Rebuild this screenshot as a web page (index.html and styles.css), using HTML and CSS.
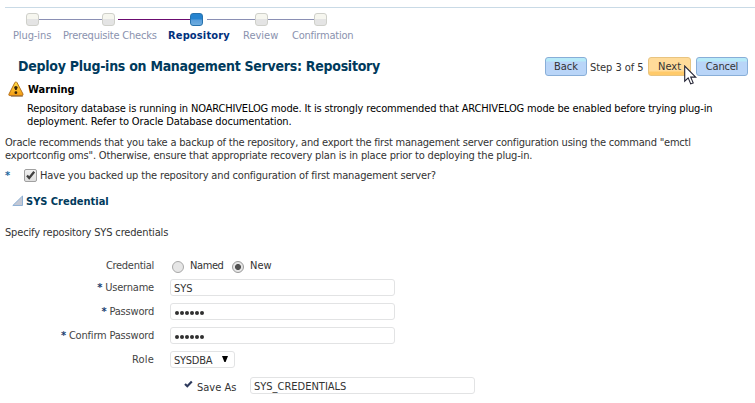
FILE: index.html
```
<!DOCTYPE html>
<html lang="en">
<head>
<meta charset="utf-8">
<title>Deploy Plug-ins on Management Servers: Repository</title>
<link rel="stylesheet" href="styles.css">
</head>
<body>
<nav class="train">
  <div class="track">
    <i class="stop"></i><i class="link"></i><i class="stop"></i><i class="link visited"></i><i class="stop current"></i><i class="link after"></i><i class="stop"></i><i class="link"></i><i class="stop"></i>
  </div>
  <div class="stop-labels">
    <span class="w-plug">Plug-ins</span><span class="w-pre">Prerequisite Checks</span><span class="w-repo active">Repository</span><span class="w-rev">Review</span><span class="w-conf">Confirmation</span>
  </div>
</nav>
<header class="heading">
  <h1>Deploy Plug-ins on Management Servers: Repository</h1>
  <div class="actions">
    <button class="btn back">Back</button>
    <span class="step">Step 3 of 5</span>
    <button class="btn next">Next
      <svg class="cursor" width="13" height="21" viewBox="0 0 13 21"><path d="M.7 1v15.2l3.5-3.3 2.5 6 2.5-1-2.5-5.8h5z" fill="#fff" stroke="#222233" stroke-width="1.1"/></svg>
    </button>
    <button class="btn cancel">Cancel</button>
  </div>
</header>
<section class="warning">
  <div class="warning-title">
    <svg width="16" height="16" viewBox="0 0 16 16"><defs><linearGradient id="amber" x2="0" y2="1"><stop stop-color="#ffe04a"/><stop offset="1" stop-color="#f39a12"/></linearGradient></defs><path d="M7.7 1 Q8.5.7 9 1.6L15 13Q15.4 14.5 14 14.6H1.8Q.3 14.5 1 13L6.8 1.7Q7.1 1 7.7 1z" fill="url(#amber)" stroke="#b5711d"/><path d="M3 15.3h11.8" stroke="#8b6a43" stroke-width=".8"/><circle cx="7.9" cy="6.6" r="1.7" fill="#3a2508"/><path d="M6.8 7h2.2l-.3 2H7.1z" fill="#3a2508"/><circle cx="7.9" cy="11.7" r="1.4" fill="#3a2508"/></svg>
    <strong>Warning</strong>
  </div>
  <p class="warning-text"><span class="line l1">Repository database is running in NOARCHIVELOG mode. It is strongly recommended that ARCHIVELOG mode be enabled before trying plug-in</span><span class="line l2">deployment. Refer to Oracle Database documentation.</span></p>
</section>
<p class="advice"><span class="line l3">Oracle recommends that you take a backup of the repository, and export the first management server configuration using the command "emctl</span><span class="line l4">exportconfig oms". Otherwise, ensure that appropriate recovery plan is in place prior to deploying the plug-in.</span></p>
<label class="confirm">
  <span class="req">*</span>
  <svg width="13" height="13" viewBox="0 0 13 13"><defs><linearGradient id="face" x2="0" y2="1"><stop stop-color="#f1f1f1"/><stop offset="1" stop-color="#dedede"/></linearGradient></defs><rect x=".5" y=".5" width="12" height="12" rx="1.5" fill="url(#face)" stroke="#a0a0a0"/><path d="M3 6.5 5.2 9 10.2 2.8" fill="none" stroke="#404040" stroke-width="2.3"/></svg>
  <span class="confirm-text">Have you backed up the repository and configuration of first management server?</span>
</label>
<h2><svg width="12" height="12" viewBox="0 0 12 12"><path d="M.8 10.5 10.5 1v9.5z" fill="#c3c8d5" stroke="#8fb1d5"/></svg><span>SYS Credential</span></h2>
<p class="hint"><span>Specify repository SYS credentials</span></p>
<form class="form">
  <div class="row first">
    <span class="label f-cred">Credential</span>
    <i class="radio"></i><span class="choice named">Named</span>
    <i class="radio on"></i><span class="choice">New</span>
  </div>
  <div class="row"><span class="label f-user"><b>*</b> Username</span><div class="field">SYS</div></div>
  <div class="row"><span class="label f-pass"><b>*</b> Password</span><div class="field dots"><i></i><i></i><i></i><i></i><i></i><i></i></div></div>
  <div class="row"><span class="label f-conf"><b>*</b> Confirm Password</span><div class="field dots"><i></i><i></i><i></i><i></i><i></i><i></i></div></div>
  <div class="row"><span class="label f-role">Role</span><div class="field select"><span>SYSDBA</span><svg width="6" height="6" viewBox="0 0 6 6"><path d="M0 0h6L3.6 6H2.4z"/></svg></div></div>
  <div class="row save"><svg width="9" height="9" viewBox="0 0 9 9"><path d="M1 4 3.3 6.2 7.8 1.6" fill="none" stroke="#2e3a5c" stroke-width="2.2"/></svg><span class="save-label">Save As</span><div class="field">SYS_CREDENTIALS</div></div>
</form>
</body>
</html>
```
FILE: styles.css
```
* { box-sizing: border-box; }
body {
  margin: 0;
  background: #fff;
  color: #333;
  font: 11px/13px "DejaVu Sans Condensed", "DejaVu Sans", sans-serif;
  font-stretch: condensed;
  white-space: nowrap;
  overflow: hidden;
}
p, h1, h2 { margin: 0; }
.train {
  margin: 7px 0 0 5px;
  border-top: 1px solid #c9dae6;
  height: 46px;
  padding: 5px 0 0 21px;
}
.track { display: flex; align-items: center; height: 13px; }
.stop {
  width: 13px;
  height: 13px;
  border: 1px solid #cfd0ca;
  border-radius: 3px;
  background: linear-gradient(#f6f6ef 45%, #e4e4e4 50%);
}
.current { border-color: #2772ad; background: linear-gradient(#2583cf 45%, #5a9edb 55%, #6eaddf); }
.link { width: 63px; height: 1px; background: #8a8fb4; }
.link.visited { width: 72px; margin-left: 3px; background: #6b0b70; }
.link.after { width: 48px; margin-left: 4px; }
.link.after ~ .link { width: 46px; }
.track .visited { margin-left: 3px; }
.stop-labels { display: flex; margin: 3px 0 0 -13px; color: #8a92ae; }
.w-plug { width: 50px; letter-spacing: -.1px; }
.w-pre { width: 105px; letter-spacing: -.2px; }
.w-repo { width: 75px; letter-spacing: .15px; }
.w-rev { width: 49px; }
.w-conf { letter-spacing: -.22px; }
.active { color: #00307d; font-weight: bold; }
.heading { display: flex; justify-content: space-between; height: 28px; padding: 4px 7px 0 18px; }
h1 { font-size: 14px; line-height: 19px; letter-spacing: -.27px; color: #003a5c; font-weight: bold; }
.actions { display: flex; }
.btn {
  position: relative;
  height: 19px;
  padding: 0 0 1px;
  border: 1px solid #88aed8;
  border-radius: 3px;
  background: linear-gradient(#b7eaf8 0 3px, #b9d5f8 4px);
  color: #333;
  font: inherit;
}
.back { width: 42px; }
.step { width: 61px; padding: 4px 0 0 3px; letter-spacing: -.05px; }
.next { width: 43px; margin-right: 5px; border-color: #e8c480; background: linear-gradient(#ffdb99 0 13px, #ffca6a 14px); }
.cancel { width: 52px; letter-spacing: -.2px; }
.cursor { position: absolute; left: 35px; top: 7px; z-index: 2; }
.warning { height: 55px; color: #000; }
.warning-title { display: flex; height: 21px; padding-left: 8px; gap: 4px; }
.warning-title strong { padding-top: 2px; }
.warning-text { padding-left: 27px; }
.line { display: block; width: max-content; }
.l1 { letter-spacing: -.157px; }
.l2 { letter-spacing: -.14px; }
.l3 { letter-spacing: -.207px; }
.l4 { letter-spacing: -.172px; }
.advice { padding-left: 5px; height: 32px; }
.confirm { display: flex; height: 27px; padding: 1px 0 0 5px; }
.confirm-text { letter-spacing: -.16px; }
.req { width: 19px; color: #1f6a9e; font-weight: bold; }
.confirm svg { margin-right: 3px; }
h2 { display: flex; font-size: 11px; line-height: 13px; height: 31px; padding-left: 12px; gap: 2px; color: #003a5c; }
.hint { padding-left: 5px; height: 33px; letter-spacing: -.16px; }
.row { display: flex; height: 24px; }
.row.first { height: 20px; }
.label { width: 154px; margin-right: 16px; text-align: right; padding-top: 2px; color: #444; letter-spacing: -.2px; }
.first .label, .first .choice { padding-top: 0; }
.f-cred { letter-spacing: -.28px; }
.f-role { letter-spacing: .2px; }
.label b { color: #1b3e70; font-weight: bold; }
.radio { width: 12px; height: 12px; margin: 2px 6px 0 2px; border: 1px solid #a8a8a8; border-radius: 50%; background: #e6e6e6; }
.radio.on { border-color: #999; background: radial-gradient(circle, #505050 0 2.6px, #e6e6e6 3.4px); }
.named { width: 40px; letter-spacing: -.4px; }
.field { width: 225px; height: 17px; border: 1px solid #e2e3e4; border-radius: 3px; padding: 2px 0 0 3px; color: #333; line-height: 13px; }
.dots { display: flex; align-items: center; gap: 1px; padding: 2px 0 0 4px; }
.dots i { width: 4px; height: 4px; border-radius: 50%; background: #303030; }
.select { display: flex; width: 65px; justify-content: space-between; padding-right: 6px; letter-spacing: -.25px; }
.select svg { margin-top: 2px; }
.save { margin-top: 2px; padding-left: 184px; }
.save svg { margin: 3px 4px 0 0; }
.save-label { width: 53px; padding-top: 4px; }
```
